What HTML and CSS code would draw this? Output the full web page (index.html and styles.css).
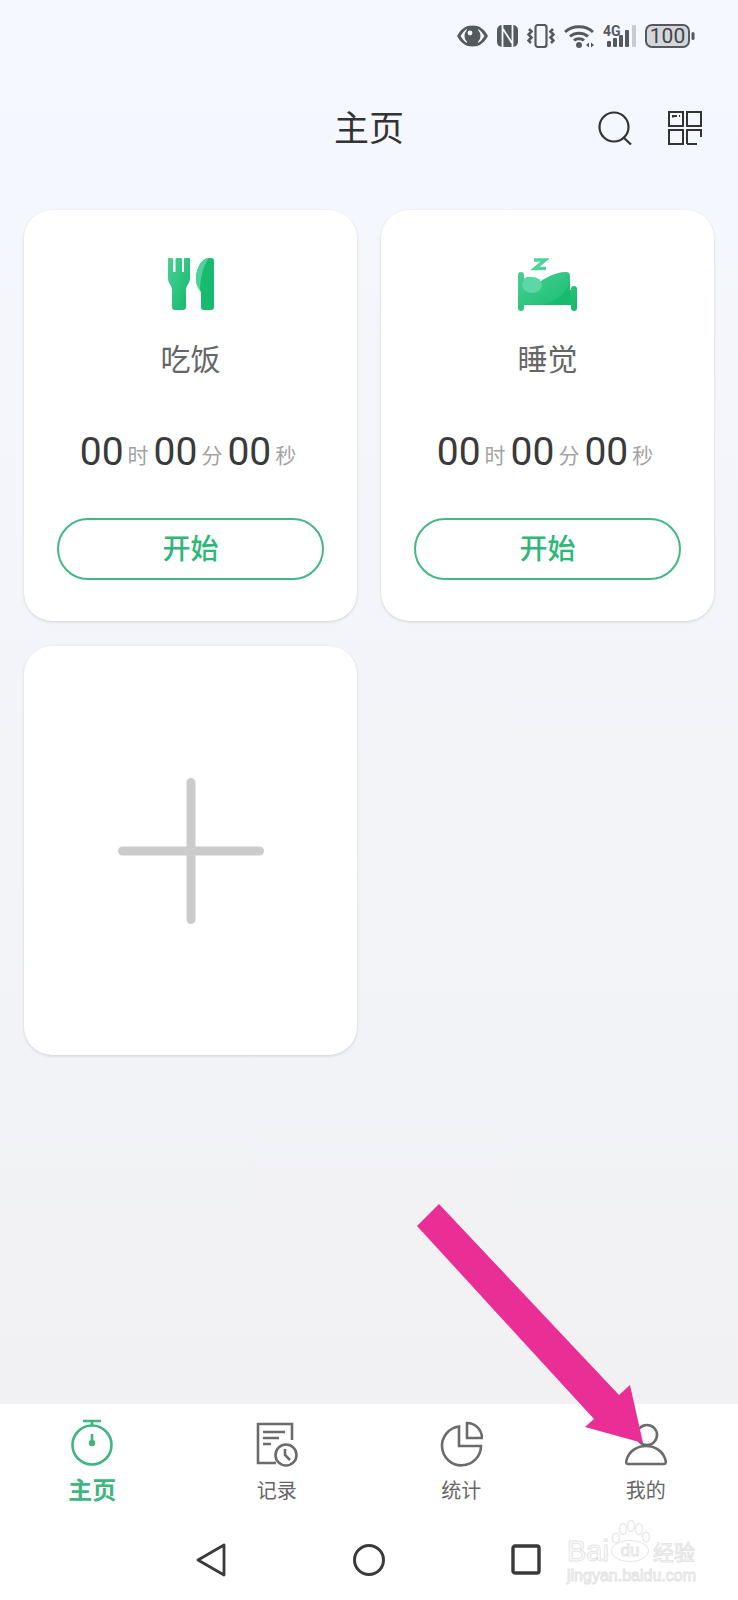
FILE: index.html
```html
<!DOCTYPE html>
<html lang="zh-CN">
<head>
    <meta charset="UTF-8">
    <meta name="viewport" content="width=device-width, initial-scale=1.0">
    <title>主页</title>
    <link rel="stylesheet" href="styles.css">
</head>
<body>
    <div class="page">
        <div class="status-bar">
            <svg width="31" height="24" viewBox="0 0 31 24"><path d="M0 12C4 4.500 9 1.500 15.500 1.500S27 4.500 31 12C27 19.500 22 22.500 15.500 22.500S4 19.500 0 12Z" fill="#555a60"/><path d="M3.500 12C6.500 7.500 8 6 10 5V19C8 18 6.500 16.500 3.500 12ZM21 5C23 6 24.500 7.500 27.500 12C24.500 16.500 23 18 21 19Z" fill="#f5f8fe"/><circle cx="15.500" cy="12" r="8" fill="#555a60"/><circle cx="13" cy="9" r="2.400" fill="#f5f8fe"/></svg>
            <svg width="21" height="24" viewBox="0 0 21 24"><rect x="0" y="1" width="21" height="22" rx="5" fill="#555a60"/><path d="M5.500 1V23M15.500 1V23M6 5L15 19" stroke="#f5f8fe" stroke-width="1.800" fill="none"/></svg>
            <svg width="28" height="24" viewBox="0 0 28 24"><rect x="8.500" y="1" width="11" height="22" rx="2.500" fill="none" stroke="#555a60" stroke-width="2.200"/><path d="M2 5L4.500 7.500L1.500 10.500L4.500 13.500L1.500 16.500L4 19M26 5L23.500 7.500L26.500 10.500L23.500 13.500L26.500 16.500L24 19" fill="none" stroke="#555a60" stroke-width="2.600"/></svg>
            <svg width="30" height="24" viewBox="0 0 30 24"><path d="M1 8C8 1 22 1 29 8M6 12.500C10.500 8 19.500 8 24 12.500M10 16.500C12.500 14 17.500 14 20 16.500" fill="none" stroke="#555a60" stroke-width="3"/><circle cx="15" cy="21" r="3" fill="#555a60"/><path d="M22 21L25 18.500V23.500ZM30 21L27 18.500V23.500Z" fill="#555a60"/></svg>
            <svg width="33" height="24" viewBox="0 0 33 24"><text x="0" y="12" class="status-net">4G</text><rect x="4" y="17" width="4" height="6" rx="1" fill="#555a60"/><rect x="10" y="14" width="4" height="9" rx="1" fill="#555a60"/><rect x="16" y="11" width="4" height="12" rx="1" fill="#555a60"/><rect x="22" y="6" width="4" height="17" rx="1" fill="#555a60"/><rect x="29" y="1" width="4" height="22" rx="1" fill="#c9ccd3"/></svg>
            <svg width="50" height="24" viewBox="0 0 50 24"><rect x="1" y="1" width="43" height="22" rx="6" fill="#d3d6dc" stroke="#555a60" stroke-width="2"/><rect x="46.500" y="8" width="3" height="8" rx="1.500" fill="#555a60"/><text x="22.500" y="19" text-anchor="middle" class="status-battery">100</text></svg>
        </div>

        <div class="header">
            <div class="header-title">主页</div>
            <div class="header-icons">
                <svg width="34" height="34" viewBox="0 0 34 34" fill="none" stroke="#333" stroke-width="2.200"><circle cx="16" cy="16" r="14.500"/><path d="M25 26L33 33.500"/></svg>
                <svg width="34" height="34" viewBox="0 0 34 34" fill="none" stroke="#333" stroke-width="2"><rect x="1" y="1" width="14" height="14"/><rect x="19" y="1" width="14" height="14"/><rect x="1" y="19" width="14" height="14"/><path d="M19 33V19H33V26M19 33H29"/><path d="M5 6.500V5H9M11 5H12"/></svg>
            </div>
        </div>

        <div class="card-grid">
            <div class="card">
                <svg class="card-icon" width="46" height="53" viewBox="0 0 46 53">
                    <defs>
                        <linearGradient id="greenFill" x1="0" y1="0" x2="1" y2="1">
                            <stop offset="0" stop-color="#47d096"/>
                            <stop offset="1" stop-color="#14b96b"/>
                        </linearGradient>
                    </defs>
                    <path fill="url(#greenFill)" d="M1 0H4a1 1 0 0 1 1 1V14H7.500V1a1 1 0 0 1 1-1H13a1 1 0 0 1 1 1V14H16V1a1 1 0 0 1 1-1H21a1 1 0 0 1 1 1V20C22 26 18 27 18 32V49a3 3 0 0 1-3 3H7a3 3 0 0 1-3-3V32C4 27 0 26 0 20V1a1 1 0 0 1 1-1Z"/>
                    <path fill="#17ba6e" d="M41 0H43a3 3 0 0 1 3 3V49a3 3 0 0 1-3 3H36a3 3 0 0 1-3-3V36C33 30 28 30 28 21C28 10 34 0 41 0Z"/>
                    <path fill="#4dd39b" d="M41 0C34 0 28 10 28 21C28 27 30 30 32 33C32 20 35 8 41 0Z"/>
                </svg>
                <div class="card-label">吃饭</div>
                <div class="timer">
                    <span class="timer-num">00</span><span class="timer-unit">时</span><span class="timer-num">00</span><span class="timer-unit">分</span><span class="timer-num">00</span><span class="timer-unit">秒</span>
                </div>
                <div class="btn">开始</div>
            </div>

            <div class="card">
                <svg class="card-icon" width="59" height="53" viewBox="0 0 59 53">
                    <path d="M16 2H27L17 10.500H28" fill="none" stroke="#4fd39c" stroke-width="3.600"/>
                    <path fill="url(#greenFill)" d="M3 14a3 3 0 0 1 3 3V21C10 17 16 18 20 25C26 21 36 14 48 14a4 4 0 0 1 4 4V32H53V31a3 3 0 0 1 6 0V50a3 3 0 0 1-6 0V47H6V50a3 3 0 0 1-6 0V17a3 3 0 0 1 3-3Z"/>
                    <path fill="#17ba6e" d="M24 47C38 44 48 36 52 24V32H53V47Z"/>
                    <ellipse cx="14" cy="27" rx="10" ry="8" fill="#5bd8a6"/>
                </svg>
                <div class="card-label">睡觉</div>
                <div class="timer">
                    <span class="timer-num">00</span><span class="timer-unit">时</span><span class="timer-num">00</span><span class="timer-unit">分</span><span class="timer-num">00</span><span class="timer-unit">秒</span>
                </div>
                <div class="btn">开始</div>
            </div>

            <div class="card card-add">
                <svg width="146" height="146" viewBox="0 0 146 146"><path d="M73 4.500V141.500M4.500 73H141.500" stroke="#cbcbcb" stroke-width="9" stroke-linecap="round"/></svg>
            </div>
        </div>

        <div class="tab-bar">
            <div class="tab tab-active">
                <svg width="44" height="48" viewBox="0 0 44 48" fill="none" stroke="#3fb67f" stroke-width="2.600"><circle cx="22" cy="26" r="19.500"/><path d="M13 2H31M22 2V6M22 15V24"/><circle cx="22" cy="24" r="3.200" fill="#3fb67f" stroke="none"/></svg>
                <div class="tab-label">主页</div>
            </div>
            <div class="tab">
                <svg width="44" height="48" viewBox="0 0 44 48" fill="none" stroke="#6b6b6b" stroke-width="2.600"><path d="M21 44H3V5H37V21"/><path d="M8 13H30M8 19H24M8 25H16" stroke-width="2.400"/><circle cx="31" cy="36" r="10.500"/><path d="M30 30V36L35 41"/></svg>
                <div class="tab-label">记录</div>
            </div>
            <div class="tab">
                <svg width="44" height="48" viewBox="0 0 44 48" fill="none" stroke="#6b6b6b" stroke-width="2.600"><path d="M20 7.500A19.500 19.500 0 1 0 42 27H20Z"/><path d="M28 4A15 15 0 0 1 43 19H28Z"/></svg>
                <div class="tab-label">统计</div>
            </div>
            <div class="tab">
                <svg width="44" height="48" viewBox="0 0 44 48" fill="none" stroke="#6b6b6b" stroke-width="2.600"><circle cx="23" cy="16" r="10"/><path d="M4 45C2 45 2 43 2.500 41C5 32 13 27 22 27S39 32 41.500 41C42 43 42 45 40 45Z"/></svg>
                <div class="tab-label">我的</div>
            </div>
        </div>

        <div class="system-nav">
            <svg width="32" height="34" viewBox="0 0 32 34" fill="none" stroke="#3a3a3a" stroke-width="2.800" stroke-linejoin="round"><path d="M29 2V32L3 17Z"/></svg>
            <svg width="32" height="34" viewBox="0 0 32 34" fill="none" stroke="#3a3a3a" stroke-width="3"><circle cx="16" cy="17" r="14.500"/></svg>
            <svg width="32" height="34" viewBox="0 0 32 34" fill="none" stroke="#3a3a3a" stroke-width="3.400"><rect x="2" y="3" width="26" height="27" rx="2"/></svg>
        </div>

        <svg class="arrow" width="738" height="1600" viewBox="0 0 738 1600"><polygon points="439,1204 619,1395 630,1385 643,1443 585,1427 594,1419 417,1226" fill="#e92f95"/></svg>

        <div class="watermark">
            <svg class="watermark-paw" width="40" height="28" viewBox="0 0 40 28" fill="none" stroke="#e8e8e8" stroke-width="1.500"><ellipse cx="5" cy="18" rx="3.500" ry="5"/><ellipse cx="12" cy="9" rx="3.500" ry="5.500"/><ellipse cx="20" cy="6" rx="3.500" ry="5.500"/><ellipse cx="28" cy="9" rx="3.500" ry="5.500"/><ellipse cx="35" cy="17" rx="3.500" ry="5"/></svg>
            <div class="watermark-top">
                <span class="watermark-bai">Bai</span>
                <span class="watermark-du">du</span>
                <span class="watermark-cn">经验</span>
            </div>
            <div class="watermark-url">jingyan.baidu.com</div>
        </div>
    </div>
</body>
</html>
```

FILE: styles.css
```css
* {
    margin: 0;
    padding: 0;
    box-sizing: border-box;
}
body {
    font-family: Roboto, "Noto Sans CJK SC", sans-serif;
}
.page {
    position: relative;
    width: 738px;
    height: 1600px;
    overflow: hidden;
    display: flex;
    flex-direction: column;
    background-image: linear-gradient(to bottom, #f5f8ff, #f1f1f3 1404px);
}
.status-bar {
    height: 88px;
    padding: 24px 43px 0 0;
    display: flex;
    justify-content: flex-end;
    align-items: flex-start;
    gap: 9px;
}
.status-net {
    font-family: "Roboto", sans-serif;
    font-size: 14px;
    font-weight: 700;
    fill: #555a60;
}
.status-battery {
    font-family: "Roboto", sans-serif;
    font-size: 21px;
    fill: #444;
}
.header {
    height: 80px;
    padding: 0 36px;
    display: grid;
    grid-template-columns: 1fr auto 1fr;
    align-items: center;
}
.header-title {
    grid-column: 2;
    margin-top: 4px;
    font-size: 35px;
    line-height: 48px;
    color: #333;
}
.header-icons {
    grid-column: 3;
    display: flex;
    justify-content: flex-end;
    gap: 36px;
}
.card-grid {
    margin-top: 42px;
    padding: 0 24px;
    display: grid;
    grid-template-columns: 333px 333px;
    column-gap: 24px;
    row-gap: 25px;
}
.card {
    background-color: #fff;
    border-radius: 28px;
    box-shadow: 0 1px 3px rgba(0, 0, 0, 0.14);
    padding: 48px 0 41px;
    display: flex;
    flex-direction: column;
    align-items: center;
}
.card-add {
    height: 409px;
    padding: 0;
    justify-content: center;
}
.card-label {
    margin-top: 29px;
    font-size: 30px;
    line-height: 40px;
    color: #666;
}
.timer {
    margin-top: 47px;
    height: 50px;
    display: flex;
    align-items: center;
}
.timer-num {
    font-size: 39px;
    line-height: 50px;
    color: #3a3a3a;
}
.timer-unit {
    margin: 8px 5px 0 4px;
    font-size: 21px;
    line-height: 30px;
    color: #a3a3a3;
}
.btn {
    margin-top: 41px;
    width: 267px;
    height: 62px;
    border: 2px solid #45b785;
    border-radius: 31px;
    font-size: 28px;
    font-weight: 500;
    line-height: 60px;
    text-align: center;
    color: #2eb878;
}
.tab-bar {
    margin-top: auto;
    padding-top: 15px;
    background-color: #fff;
    display: grid;
    grid-template-columns: repeat(4, 1fr);
}
.tab {
    display: flex;
    flex-direction: column;
    align-items: center;
}
.tab-label {
    margin-top: 7px;
    font-size: 20px;
    line-height: 34px;
    color: #666;
}
.tab-active .tab-label {
    font-size: 24px;
    font-weight: 700;
    color: #3fb67f;
}
.system-nav {
    height: 92px;
    padding-top: 12px;
    background-color: #fff;
    display: flex;
    justify-content: center;
    align-items: center;
    gap: 126px;
}
.arrow {
    position: absolute;
    left: 0;
    top: 0;
}
.watermark {
    position: absolute;
    left: 567px;
    top: 1520px;
    width: 134px;
    color: #fff;
    font-family: "Liberation Sans", "Noto Sans CJK SC", sans-serif;
    -webkit-text-stroke: 1px #e4e4e4;
}
.watermark-paw {
    position: absolute;
    left: 44px;
    top: 0;
}
.watermark-top {
    margin-top: 16px;
    height: 30px;
    display: flex;
    align-items: center;
    white-space: nowrap;
}
.watermark-bai {
    width: 44px;
    font-size: 29px;
}
.watermark-du {
    width: 38px;
    height: 22px;
    margin-right: 4px;
    border: 1px solid #e8e8e8;
    border-radius: 50%;
    font-size: 17px;
    line-height: 19px;
    text-align: center;
}
.watermark-cn {
    font-size: 21px;
}
.watermark-url {
    margin-top: 1px;
    font-size: 16px;
    line-height: 17px;
    white-space: nowrap;
}
```
